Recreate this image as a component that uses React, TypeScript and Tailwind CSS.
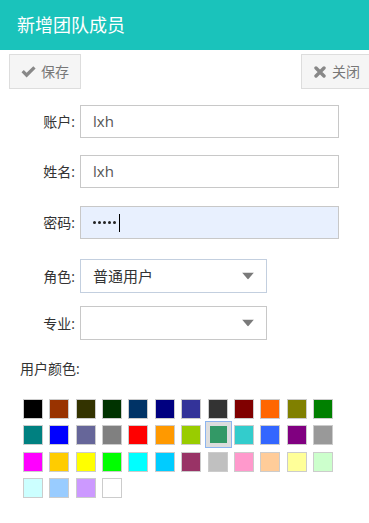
const colors = [
  "#000000", "#993300", "#333300", "#003300", "#003366", "#000080", "#333399", "#333333", "#800000", "#ff6600", "#808000", "#008000",
  "#008080", "#0000ff", "#666699", "#808080", "#ff0000", "#ff9900", "#99cc00", "#339966", "#33cccc", "#3366ff", "#800080", "#999999",
  "#ff00ff", "#ffcc00", "#ffff00", "#00ff00", "#00ffff", "#00ccff", "#993366", "#c0c0c0", "#ff99cc", "#ffcc99", "#ffff99", "#ccffcc",
  "#ccffff", "#99ccff", "#cc99ff", "#ffffff",
];

const selected = 19;

function Arrow() {
  return (
    <svg width="12" height="7" viewBox="0 0 12 7" className="absolute right-[12px] top-1/2 -translate-y-1/2">
      <path d="M0 0 L12 0 L6 7 Z" fill="#7a7a7a" />
    </svg>
  );
}

function CheckIcon() {
  return (
    <svg width="15" height="12" viewBox="0 0 15 12">
      <path d="M0.5 6.3 L2.8 4 L5.6 6.8 L12.3 0.2 L14.6 2.5 L5.6 11.4 Z" fill="#888888" />
    </svg>
  );
}

function XIcon() {
  return (
    <svg width="12" height="12" viewBox="0 0 12 12">
      <path d="M2 2 L10 10 M10 2 L2 10" stroke="#888888" strokeWidth="3.4" strokeLinecap="round" />
    </svg>
  );
}

export default function App() {
  return (
    <div
      className="w-[369px] h-[523px] overflow-hidden bg-white text-[#333]"
      style={{ fontFamily: '"Open Sans", "Noto Sans CJK SC", sans-serif' }}
    >
      <div className="h-[50px] bg-[#1ac3bb] flex items-center pl-[17px] text-white text-[18px]">
        新增团队成员
      </div>

      <div className="flex justify-between mt-[4px] pl-[9px]">
        <button className="h-[35px] w-[72px] flex items-center justify-center gap-[5px] bg-[#f5f5f5] border border-[#dddddd] text-[#777] text-[14px]">
          <CheckIcon />
          保存
        </button>
        <button className="h-[35px] w-[72px] mr-[-4px] flex items-center justify-center gap-[6px] bg-[#f5f5f5] border border-[#dddddd] text-[#777] text-[14px]">
          <XIcon />
          关闭
        </button>
      </div>

      <div className="flex items-center mt-[16px]">
        <label className="w-[75px] text-right text-[14px]">账户:</label>
        <div className="ml-[5px] w-[259px] h-[33px] border border-[#c8c8c8] flex items-center pl-[12px] text-[15px] text-[#555]">
          lxh
        </div>
      </div>

      <div className="flex items-center mt-[17px]">
        <label className="w-[75px] text-right text-[14px]">姓名:</label>
        <div className="ml-[5px] w-[259px] h-[33px] border border-[#c8c8c8] flex items-center pl-[12px] text-[15px] text-[#555]">
          lxh
        </div>
      </div>

      <div className="flex items-center mt-[18px]">
        <label className="w-[75px] text-right text-[14px]">密码:</label>
        <div className="ml-[5px] w-[259px] h-[33px] border border-[#c8c8c8] bg-[#e8f0fe] flex items-center pl-[12px] gap-[2px]">
          {[0, 1, 2, 3, 4].map((d) => (
            <span key={d} className="w-[3px] h-[3px] rounded-full bg-[#222]" />
          ))}
          <span className="ml-[1px] w-[1px] h-[18px] bg-black" />
        </div>
      </div>

      <div className="flex items-center mt-[20px]">
        <label className="w-[75px] text-right text-[14px]">角色:</label>
        <div className="relative ml-[5px] w-[187px] h-[34px] border border-[#c3cfdf] flex items-center pl-[12px] text-[15px] text-[#333]">
          普通用户
          <Arrow />
        </div>
      </div>

      <div className="flex items-center mt-[13px]">
        <label className="w-[75px] text-right text-[14px]">专业:</label>
        <div className="relative ml-[5px] w-[187px] h-[34px] border border-[#c8c8c8]">
          <Arrow />
        </div>
      </div>

      <div className="mt-[18px] pl-[20px] text-[14px]">用户颜色:</div>

      <div className="mt-[20px] ml-[23px] grid grid-cols-[repeat(12,20px)] gap-x-[6.36px] gap-y-[6.33px]">
        {colors.map((c, i) =>
          i === selected ? (
            <div key={c} className="w-[20px] h-[20px] relative">
              <div className="absolute -left-[3px] -top-[4px] w-[27px] h-[27px] border border-[#8db5ef] bg-[#dddddd] p-[4px]">
                <div className="w-full h-full" style={{ backgroundColor: c }} />
              </div>
            </div>
          ) : (
            <div key={c} className="w-[20px] h-[20px] border border-[#cccccc]" style={{ backgroundColor: c }} />
          )
        )}
      </div>
    </div>
  );
}
